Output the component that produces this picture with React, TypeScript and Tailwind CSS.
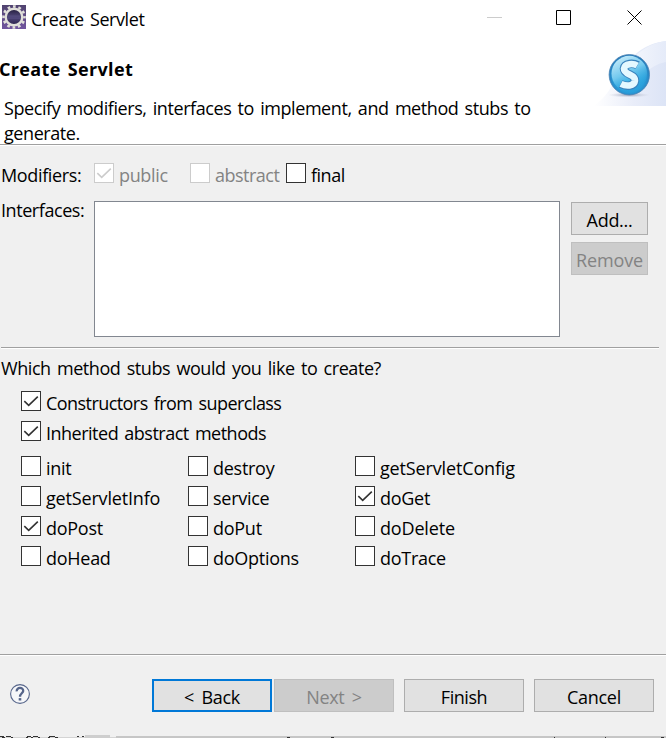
import React from "react";

type CheckState = { checked?: boolean; disabled?: boolean };

function CheckBox({ checked, disabled }: CheckState) {
  return (
    <span
      className={`flex h-5 w-5 shrink-0 border bg-white ${disabled ? "border-[#cccccc]" : "border-[#333333]"}`}
    >
      {checked && (
        <svg
          width="18"
          height="18"
          viewBox="0 0 18 18"
          fill="none"
          stroke={disabled ? "#cccccc" : "#333333"}
          strokeWidth="1.6"
        >
          <path d="M2.3 9.2 6.7 13.4 15.8 4.6" />
        </svg>
      )}
    </span>
  );
}

function Option({
  label,
  checked,
  disabled,
  tracking = "tracking-[-0.27px]",
}: CheckState & { label: string; tracking?: string }) {
  return (
    <label className="flex h-[30px] items-start">
      <CheckBox checked={checked} disabled={disabled} />
      <span
        className={`ml-[5px] whitespace-nowrap ${disabled ? "text-[#838383]" : ""} ${tracking}`}
      >
        {label}
      </span>
    </label>
  );
}

function Button({
  children,
  className,
  look = "normal",
}: {
  children: React.ReactNode;
  className: string;
  look?: "normal" | "disabled" | "focused";
}) {
  const looks = {
    normal: "border border-[#adadad] bg-[#e1e1e1] pt-[3px]",
    disabled: "border border-[#bfbfbf] bg-[#cccccc] pt-[3px] text-[#838383]",
    focused: "border-2 border-[#0078d7] bg-[#e1e1e1] pt-[3px]",
  };
  return (
    <button
      className={`flex h-[33px] items-center justify-center whitespace-nowrap [word-spacing:3px] ${looks[look]} ${className}`}
    >
      {children}
    </button>
  );
}

function Rule() {
  return <div className="h-[2px] shrink-0 border-b border-white bg-[#a0a0a0]" />;
}

function GearIcon() {
  return (
    <svg width="24" height="24" viewBox="0 0 24 24" className="shrink-0">
      <defs>
        <linearGradient id="gearBg" x1="0" y1="0" x2="0" y2="1">
          <stop offset="0" stopColor="#50436f" />
          <stop offset="1" stopColor="#71559f" />
        </linearGradient>
        <linearGradient id="gearHole" x1="0" y1="0" x2="0" y2="1">
          <stop offset="0" stopColor="#211b3a" />
          <stop offset="0.5" stopColor="#51487b" />
          <stop offset="1" stopColor="#29204c" />
        </linearGradient>
      </defs>
      <rect width="24" height="24" fill="url(#gearBg)" />
      <circle
        cx="12"
        cy="12"
        r="10.5"
        fill="none"
        stroke="#e0dfda"
        strokeWidth="2.6"
        strokeDasharray="2.75 2.7478"
        strokeDashoffset="1.37"
      />
      <circle cx="12" cy="12" r="8.3" fill="url(#gearHole)" stroke="#e0dfda" strokeWidth="2.4" />
      <path d="M5.6 11h12.8M5.8 13.3h12.4" stroke="#5e558a" strokeWidth=".5" />
    </svg>
  );
}

function ServletBanner() {
  return (
    <svg width="76" height="70" viewBox="0 0 76 70" className="shrink-0">
      <defs>
        <linearGradient id="sweep" x1="0" y1="0" x2="1" y2="0">
          <stop offset="0" stopColor="#ffffff" />
          <stop offset="0.55" stopColor="#e9edf9" />
          <stop offset="1" stopColor="#dce4f6" />
        </linearGradient>
        <linearGradient id="sweepTop" x1="0" y1="0" x2="1" y2="0">
          <stop offset="0" stopColor="#f6f8fd" />
          <stop offset="1" stopColor="#e5ebf9" />
        </linearGradient>
        <radialGradient id="ball" cx=".5" cy=".55" r=".55">
          <stop offset="0" stopColor="#31b2e8" />
          <stop offset="0.7" stopColor="#2a9fdb" />
          <stop offset="1" stopColor="#2675b4" />
        </radialGradient>
        <linearGradient id="shine" x1="0" y1="0" x2=".5" y2="1">
          <stop offset="0" stopColor="#d8f2fc" />
          <stop offset="0.55" stopColor="#73c9ee" />
          <stop offset="1" stopColor="#2fabe2" stopOpacity="0" />
        </linearGradient>
        <radialGradient id="shade">
          <stop offset="0" stopColor="#9aa0b4" />
          <stop offset="1" stopColor="#c8cede" stopOpacity="0" />
        </radialGradient>
      </defs>
      <path d="M4 66C30 49 30 7 76 1V66Z" fill="url(#sweep)" />
      <path d="M37 25C47 12 60 3 76 1V22C59 25 50 38 43 52Z" fill="url(#sweepTop)" />
      <ellipse cx="39" cy="55" rx="21" ry="2.5" fill="url(#shade)" />
      <circle cx="39.3" cy="34.7" r="20.2" fill="url(#ball)" stroke="#4b83b4" strokeWidth=".8" />
      <circle cx="39.3" cy="33.6" r="17.8" fill="url(#shine)" />
      <g fill="none">
        <path
          d="M47.6 25.3C43.6 23 34.6 22.8 34 28.6C33.8 35 45.6 34 45 40.6C44.2 46.8 36 46.6 30.6 44"
          stroke="#3a83bd"
          strokeWidth="8.6"
        />
        <path
          d="M47.2 25.5C43.6 23.4 34.8 23 34 28.6C33.8 35 45.6 34 45 40.6C44.2 46.6 36 46.4 31 43.9"
          stroke="#e4f8ff"
          strokeWidth="6.6"
        />
      </g>
    </svg>
  );
}

function HelpIcon() {
  return (
    <svg width="20" height="20" viewBox="0 0 20 20" className="shrink-0" fill="none" stroke="#56658a">
      <circle cx="10" cy="10" r="9.4" fill="#f6f7f9" strokeWidth="1.1" />
      <path d="M6.7 7.4C6.4 2.8 13.4 2.9 13.2 6.9C13.1 9.3 10.1 9.4 10 12.7" strokeWidth="2.3" />
      <path d="M8.7 15.3h2.6" strokeWidth="2.4" />
    </svg>
  );
}

/* Top edge of the window that lies behind the dialog. */
function WindowEdge() {
  return (
    <svg width="666" height="3" viewBox="0 0 666 3" className="shrink-0" shapeRendering="crispEdges">
      <path d="M116 1h550v2H116z" fill="#c6c6c6" />
      <path d="M0 2h116v1H0z" fill="#d4d4d4" />
      <path d="M85 0h25v3H85z" fill="#cecece" />
      <path
        d="M0 1h4v1H0zM6 1h5v1H6zM2 2h3v1H2zM11 2h2v1h-2zM27 1h4v1h-4zM33 1h5v1h-5zM26 2h2v1h-2zM31 2h2v1h-2zM38 2h2v1h-2zM49 1h6v1h-6zM48 2h2v1h-2zM55 2h3v1h-3zM77 1h2v1h-2zM82 1h2v1h-2zM287 2h3v1h-3zM331 2h3v1h-3zM554 2h1v1h-1zM605 2h1v1h-1zM661 2h3v1h-3z"
        fill="#333"
      />
    </svg>
  );
}

const stubs = [
  { label: "init" },
  { label: "destroy" },
  { label: "getServletConfig", tracking: "tracking-[-0.15px]" },
  { label: "getServletInfo", tracking: "tracking-[-0.17px]" },
  { label: "service" },
  { label: "doGet", checked: true },
  { label: "doPost", checked: true },
  { label: "doPut" },
  { label: "doDelete", tracking: "tracking-[-0.16px]" },
  { label: "doHead" },
  { label: "doOptions" },
  { label: "doTrace" },
];

export default function App() {
  return (
    <div className="flex h-[738px] w-[666px] flex-col overflow-hidden bg-[#f0f0f0] font-['Open_Sans','Noto_Sans',sans-serif] text-[18px] leading-6 tracking-[-0.43px] text-black [word-spacing:2px]">
      <header className="flex h-[144px] shrink-0 flex-col bg-white">
        <div className="flex h-10 shrink-0 items-start justify-between">
          <div className="flex pl-[2px] pt-[5px]">
            <GearIcon />
            <h1 className="ml-[5px] mt-[2px]">Create Servlet</h1>
          </div>
          <div className="flex pr-[23px] pt-[10px]">
            <svg width="156" height="16" viewBox="0 0 156 16" fill="none">
              <path d="M0 7.5h15" stroke="#cccccc" />
              <path d="M69.5.5h14v14h-14z" stroke="#000" />
              <path d="m140.5.5 14 14m0-14-14 14" stroke="#000" />
            </svg>
          </div>
        </div>
        <div className="flex h-[104px] shrink-0 justify-between">
          <div className="pt-[17px]">
            <h2 className="-ml-px font-bold tracking-[0.35px]">Create Servlet</h2>
            <p className="mt-[15px] w-[560px] pl-1 leading-[25px]">
              Specify modifiers, interfaces to implement, and method stubs to
              <br />
              generate.
            </p>
          </div>
          <ServletBanner />
        </div>
      </header>
      <Rule />

      <main className="flex h-[508px] shrink-0 flex-col">
        <div className="flex h-[52px] pt-[17px]">
          <span className="w-[94px] pl-px tracking-[-0.36px]">Modifiers:</span>
          <div className="flex">
            <div className="w-24">
              <Option label="public" checked disabled tracking="tracking-[-0.35px]" />
            </div>
            <div className="w-24">
              <Option label="abstract" disabled tracking="tracking-[-0.5px]" />
            </div>
            <Option label="final" tracking="tracking-[-0.5px]" />
          </div>
        </div>
        <div className="flex h-[149px]">
          <span className="w-[94px] pl-px">Interfaces:</span>
          <div className="mt-[3px] h-[136px] w-[466px] border border-[#828790] bg-white" />
          <div className="ml-[11px] flex flex-col gap-[7px] pt-1">
            <Button className="w-[77px] tracking-[-0.3px]">Add...</Button>
            <Button className="w-[77px] tracking-[-0.1px]" look="disabled">
              Remove
            </Button>
          </div>
        </div>
        <div className="ml-px mr-[7px]">
          <Rule />
        </div>
        <p className="pl-px pt-[7px]">Which method stubs would you like to create?</p>
        <div className="pl-[21px] pt-[11px]">
          <Option label="Constructors from superclass" checked tracking="tracking-[-0.56px]" />
          <Option label="Inherited abstract methods" checked tracking="tracking-[-0.5px]" />
        </div>
        <div className="grid grid-cols-[167px_167px_auto] pl-[21px] pt-[5px]">
          {stubs.map((stub) => (
            <Option key={stub.label} {...stub} />
          ))}
        </div>
      </main>
      <Rule />

      <footer className="flex h-[79px] shrink-0 items-start pl-[10px] pt-[23px] tracking-[-0.3px]">
        <div className="w-[142px] pt-[5px]">
          <HelpIcon />
        </div>
        <Button className="w-[120px]" look="focused">
          &lt; Back
        </Button>
        <Button className="ml-[2px] w-[120px]" look="disabled">
          Next &gt;
        </Button>
        <Button className="ml-[10px] w-[120px] tracking-[-0.45px]">Finish</Button>
        <Button className="ml-[10px] w-[120px]">Cancel</Button>
      </footer>
      <WindowEdge />
    </div>
  );
}
